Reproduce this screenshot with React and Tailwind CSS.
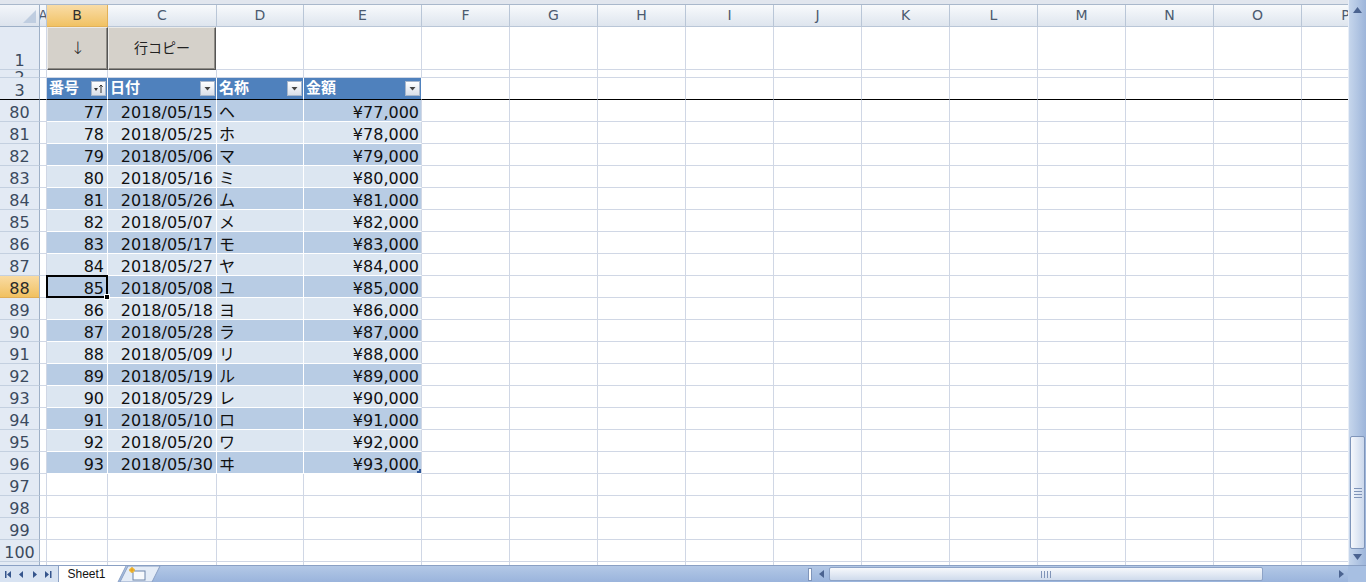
import clsx from 'clsx';

const FONT = "font-['DejaVu_Sans','Noto_Sans_CJK_JP',sans-serif]";

const COLS = [
  { key: 'A', w: 'w-[7px]' },
  { key: 'B', w: 'w-[61px]' },
  { key: 'C', w: 'w-[109px]' },
  { key: 'D', w: 'w-[87px]' },
  { key: 'E', w: 'w-[118px]' },
  ...['F', 'G', 'H', 'I', 'J', 'K', 'L', 'M', 'N', 'O', 'P'].map((k) => ({ key: k, w: 'w-[88px]' })),
];

const DATES = ['05/15', '05/25', '05/06', '05/16', '05/26', '05/07', '05/17', '05/27', '05/08', '05/18', '05/28', '05/09', '05/19', '05/29', '05/10', '05/20', '05/30'];
const NAMES = 'ヘホマミムメモヤユヨラリルレロワヰ'.split('');

const TABLE_START = 80;

// body rows 80..101 (101 is only partly visible)
const BODY = Array.from({ length: 22 }, (_, i) => 80 + i);

function RowHead({ n, selected, className, children }) {
  return (
    <div
      className={clsx(
        'w-[40px] shrink-0 border-r border-b border-r-[#9eb0c7] text-center text-[16px] overflow-hidden',
        selected
          ? 'bg-gradient-to-b from-[#f9dba2] to-[#f1c15f] text-[#2a2a2a] border-b-[#e0ae57]'
          : 'bg-[#e3eaf4] text-[#3c4a5e] border-b-[#c4d0e0]',
        className
      )}
    >
      {children ?? n}
    </div>
  );
}

function Cell({ w, className, children }) {
  return (
    <div className={clsx(w, 'shrink-0 h-full border-r border-b border-[#d0d7e5] overflow-hidden', className)}>
      {children}
    </div>
  );
}

function FilterButton({ sorted }) {
  return (
    <div className="w-[15px] h-[15px] shrink-0 border border-[#a8b7cb] bg-gradient-to-b from-[#ffffff] to-[#d9e0ea] flex items-center justify-center">
      <svg width="11" height="11" viewBox="0 0 11 11">
        {sorted ? (
          <>
            <path d="M1 5h4l-2 3z" fill="#333" />
            <path d="M8 10V2M6.3 3.8L8 2l1.7 1.8" stroke="#333" strokeWidth="1" fill="none" />
          </>
        ) : (
          <path d="M2.5 4h6l-3 3.5z" fill="#444" />
        )}
      </svg>
    </div>
  );
}

function TableRow({ r }) {
  const i = r - TABLE_START;
  const num = 77 + i;
  const band = i % 2 === 0 ? 'bg-[#b8cce4]' : 'bg-[#dce6f1]';
  const cellCls = clsx(band, 'border-white leading-[23px] pt-[1px] text-[16px] text-[#111]');
  const selected = r === 88;
  const last = r === 96;

  return (
    <div className="flex h-[22px]">
      <RowHead n={r} selected={selected} className="leading-[23px] pt-[1px]" />
      <Cell w="w-[7px]" />
      <div className={clsx('w-[61px] shrink-0 h-full border-r border-b text-right pr-[3px] relative', cellCls)}>
        {num}
        {selected && (
          <>
            <div className="absolute left-[-1px] top-[-1px] right-[-1px] bottom-[-1px] border-2 border-black z-10" />
            <div className="absolute right-[-3px] bottom-[-3px] w-[6px] h-[6px] bg-black border border-white z-20" />
          </>
        )}
      </div>
      <div className={clsx('w-[109px] shrink-0 h-full border-r border-b text-right pr-[3px] overflow-hidden', cellCls)}>
        2018/{DATES[i]}
      </div>
      <div className={clsx('w-[87px] shrink-0 h-full border-r border-b pl-[2px] overflow-hidden', cellCls)}>{NAMES[i]}</div>
      <div className={clsx('w-[118px] shrink-0 h-full border-r border-b border-r-[#d0d7e5] text-right pr-[2px] relative', cellCls)}>
        ¥{(num * 1000).toLocaleString('en-US')}
        {last && <div className="absolute right-0 bottom-0 w-[4px] h-[4px] border-r-2 border-b-2 border-[#2d5597]" />}
      </div>
      {COLS.slice(5).map((c) => (
        <Cell key={c.key} w={c.w} className="bg-white" />
      ))}
    </div>
  );
}

function EmptyRow({ r }) {
  return (
    <div className="flex h-[22px] shrink-0">
      <RowHead n={r} className="leading-[23px] pt-[1px]" />
      {COLS.map((c) => (
        <Cell key={c.key} w={c.w} className="bg-white" />
      ))}
    </div>
  );
}

function FormButton({ w, children, className }) {
  return (
    <div
      className={clsx(
        w,
        'shrink-0 h-full bg-[#d5d1ca] border border-t-[#ecebe8] border-l-[#ecebe8] border-r-[#555] border-b-[#555] shadow-[inset_-1px_-1px_0_#8f8c86] flex items-center justify-center text-[#222]',
        className
      )}
    >
      {children}
    </div>
  );
}

function Grid() {
  return (
    <div className="flex-1 min-h-0 overflow-hidden bg-white">
      {/* column headers */}
      <div className="flex h-[22px]">
        <div className="w-[40px] shrink-0 border-r border-b border-[#9eb0c7] bg-gradient-to-b from-[#f3f6fa] to-[#dce3ed] flex items-end justify-end pr-[3px] pb-[3px]">
          <svg width="13" height="13" viewBox="0 0 13 13">
            <path d="M13 0V13H0z" fill="#bfcde0" />
          </svg>
        </div>
        {COLS.map((c) => (
          <div
            key={c.key}
            className={clsx(
              c.w,
              'shrink-0 border-r border-b flex items-center justify-center text-[14px] overflow-hidden',
              c.key === 'B'
                ? 'bg-gradient-to-b from-[#f9dca6] to-[#f1c262] border-[#e2b158] text-[#2f2f2f]'
                : 'bg-gradient-to-b from-[#f8fafc] to-[#dee5ee] border-[#b9c6d7] text-[#4c5b70]'
            )}
          >
            {c.key}
          </div>
        ))}
      </div>

      {/* row 1 with buttons */}
      <div className="flex h-[43px]">
        <RowHead className="flex items-end justify-center leading-[16px] pb-0">1</RowHead>
        <Cell w="w-[7px]" />
        <FormButton w="w-[61px]" className="text-[17px] font-light">↓</FormButton>
        <FormButton w="w-[108px]" className="text-[14px]">行コピー</FormButton>
        <div className="w-px shrink-0 border-b border-[#d0d7e5]" />
        {COLS.slice(3).map((c) => (
          <Cell key={c.key} w={c.w} />
        ))}
      </div>

      {/* row 2, almost hidden */}
      <div className="flex h-[8px]">
        <RowHead className="leading-[16px] text-[14px]">2</RowHead>
        {COLS.map((c) => (
          <Cell key={c.key} w={c.w} />
        ))}
      </div>

      {/* row 3: table header, freeze line below */}
      <div className="flex h-[22px]">
        <RowHead className="leading-[23px] pt-[1px] border-b-black">3</RowHead>
        <Cell w="w-[7px]" className="border-b-black" />
        {[
          { label: '番号', w: 'w-[61px]', sorted: true },
          { label: '日付', w: 'w-[109px]' },
          { label: '名称', w: 'w-[87px]' },
          { label: '金額', w: 'w-[118px]' },
        ].map((h) => (
          <div
            key={h.label}
            className={clsx(
              h.w,
              'shrink-0 h-full bg-[#4f81bd] border-r border-r-white border-b border-b-black flex items-center justify-between pl-[2px] pr-[1px] text-white font-bold text-[15px]'
            )}
          >
            <span>{h.label}</span>
            <FilterButton sorted={h.sorted} />
          </div>
        ))}
        {COLS.slice(5).map((c) => (
          <Cell key={c.key} w={c.w} className="border-b-black" />
        ))}
      </div>

      {BODY.map((r) =>
        r <= 96 ? <TableRow key={r} r={r} /> : <EmptyRow key={r} r={r} />
      )}
    </div>
  );
}

function VScroll() {
  return (
    <div className="w-[18px] shrink-0 flex flex-col bg-gradient-to-r from-[#c6d6ec] to-[#9db5da] border-l border-[#e8eef7]">
      <div className="h-[20px] flex items-center justify-center">
        <svg width="9" height="6" viewBox="0 0 9 6">
          <path d="M0 6L4.5 0L9 6z" fill="#4b6390" />
        </svg>
      </div>
      <div className="flex-1" />
      <div className="h-[113px] mx-[1px] rounded-[2px] border border-[#7f95ba] bg-gradient-to-r from-[#f6f8fc] to-[#cbd8ec] flex flex-col items-center justify-center gap-[2px]">
        <div className="w-[8px] h-px bg-[#8094b8]" />
        <div className="w-[8px] h-px bg-[#8094b8]" />
        <div className="w-[8px] h-px bg-[#8094b8]" />
        <div className="w-[8px] h-px bg-[#8094b8]" />
      </div>
      <div className="h-[16px] flex items-center justify-center">
        <svg width="9" height="6" viewBox="0 0 9 6">
          <path d="M0 0L4.5 6L9 0z" fill="#4b6390" />
        </svg>
      </div>
    </div>
  );
}

function NavArrows() {
  return (
    <div className="w-[58px] shrink-0 h-full bg-[#d8e3f2] flex items-center justify-center gap-[6px]">
      <svg width="50" height="7" viewBox="0 0 50 7">
        <rect x="1" y="0" width="1.5" height="7" fill="#35558c" />
        <path d="M7 0L3 3.5L7 7z" fill="#35558c" />
        <path d="M19 0L15 3.5L19 7z" fill="#35558c" />
        <path d="M29 0L33 3.5L29 7z" fill="#35558c" />
        <path d="M41 0L45 3.5L41 7z" fill="#35558c" />
        <rect x="46" y="0" width="1.5" height="7" fill="#35558c" />
      </svg>
    </div>
  );
}

function BottomBar() {
  return (
    <div className="h-[17px] shrink-0 flex bg-gradient-to-b from-[#b3c8e6] to-[#9ab4dc] border-t border-[#8aa0c4]">
      <NavArrows />
      <div className="w-[56px] shrink-0 h-full bg-white border-l border-[#8aa0c4] flex items-center justify-center font-['Liberation_Sans',sans-serif] text-[12px] text-[#111] leading-none">
        Sheet1
      </div>
      <svg width="48" height="17" viewBox="0 0 48 17" className="shrink-0">
        <path d="M0 0L0 16L4 16L12 0z" fill="#fff" />
        <path d="M4 16L12 0" stroke="#8aa0c4" strokeWidth="1" />
        <path d="M6 16L14 0H46L38 16z" fill="#e4ecf7" stroke="#8aa0c4" strokeWidth="1" />
        <rect x="19" y="5" width="12" height="9" fill="#f7f9fc" stroke="#6d84aa" strokeWidth="1" />
        <circle cx="18" cy="4" r="2.6" fill="#f5c542" />
        <path d="M15 4H21M18 1V7" stroke="#e09a1a" strokeWidth="1" />
      </svg>
      <div className="flex-1" />
      {/* horizontal scrollbar */}
      <div className="w-[540px] shrink-0 h-full flex items-center">
        <div className="w-[4px] h-[13px] bg-white border border-[#7f95ba] mr-[3px]" />
        <div className="w-[12px] h-full flex items-center justify-center">
          <svg width="5" height="8" viewBox="0 0 5 8">
            <path d="M5 0L0 4L5 8z" fill="#4b6390" />
          </svg>
        </div>
        <div className="w-[434px] h-[14px] ml-[2px] rounded-[2px] border border-[#8da3c7] bg-gradient-to-b from-[#f7f9fc] to-[#cfdbec] flex items-center justify-center gap-[2px]">
          <div className="w-px h-[7px] bg-[#8094b8]" />
          <div className="w-px h-[7px] bg-[#8094b8]" />
          <div className="w-px h-[7px] bg-[#8094b8]" />
          <div className="w-px h-[7px] bg-[#8094b8]" />
        </div>
        <div className="flex-1" />
        <div className="w-[14px] h-full flex items-center justify-center">
          <svg width="5" height="8" viewBox="0 0 5 8">
            <path d="M0 0L5 4L0 8z" fill="#4b6390" />
          </svg>
        </div>
      </div>
      <div className="w-[18px] shrink-0 h-full bg-[#a7bfe2]" />
    </div>
  );
}

export default function App() {
  return (
    <div className={clsx('w-[1366px] h-[582px] overflow-hidden flex flex-col bg-white', FONT)}>
      <div className="flex flex-1 min-h-0">
        <div className="flex-1 min-w-0 flex flex-col">
          <div className="h-[5px] shrink-0 bg-[#e1e6ee] border-b border-[#a9b8cb]" />
          <Grid />
        </div>
        <VScroll />
      </div>
      <BottomBar />
    </div>
  );
}
